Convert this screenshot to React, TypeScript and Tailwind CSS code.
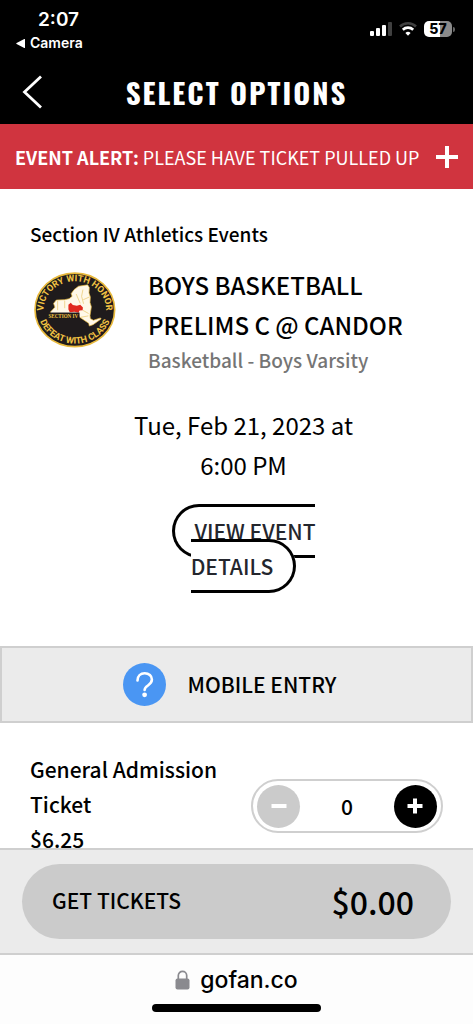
import { useState } from "react";

const PRICE = 6.25;

function StatusBar() {
  return (
    <div className="flex h-[60px] items-start justify-between bg-black pl-4 pr-[18px] font-['Inter',sans-serif] text-white">
      <div className="pt-2">
        <p className="pl-[22px] text-[19px] font-semibold leading-6">2:07</p>
        <p className="flex items-center gap-1 text-sm font-semibold leading-[22px]">
          <svg className="h-[9px] w-[10px]" viewBox="0 0 10 9" fill="currentColor">
            <path d="M9 0.3v8.4a0.5 0.5 0 0 1-.7.2L.6 5a.6.6 0 0 1 0-1L8.300.1a.5.5 0 0 1 .7.2z" />
          </svg>
          Camera
        </p>
      </div>
      <div className="flex items-center gap-[7px] pt-[21px]">
        <svg className="h-4 w-[22px]" viewBox="0 0 22 16" fill="currentColor">
          <rect x="0" y="10" width="4" height="5" rx="1" />
          <rect x="6" y="7" width="4" height="8" rx="1" />
          <rect x="12" y="4" width="4" height="11" rx="1" />
          <rect x="18" y="1" width="4" height="14" rx="1" opacity="0.25" />
        </svg>
        <svg className="h-4 w-[18px]" viewBox="0 0 18 16" fill="none" stroke="currentColor">
          <path d="M1 5.500a11.500 11.500 0 0 1 16 0" strokeWidth="2.600" opacity="0.25" />
          <path d="M3.800 8.700a7.600 7.600 0 0 1 10.400 0" strokeWidth="2.600" />
          <path d="M9 14.800l-2.600-2.900a4 4 0 0 1 5.200 0z" fill="currentColor" stroke="none" />
        </svg>
        <div className="flex items-center gap-px">
          <span className="flex h-4 w-7 items-center justify-center rounded-[5px] bg-linear-to-r from-white from-57% to-[#8a8a8a] to-57% text-sm font-extrabold leading-4 text-black">
            57
          </span>
          <span className="h-[5px] w-[2px] rounded-r-full bg-[#666]" />
        </div>
      </div>
    </div>
  );
}

function SectionLogo() {
  return (
    <svg className="h-[76px] w-[82px] shrink-0" viewBox="27 24 243 225" role="img" aria-label="Section IV">
      <defs>
        <path id="arc-top" d="M56 150A93 86 0 1 1 240 150" />
        <path id="arc-bottom" d="M39 136A109 100 0 0 0 257 136" />
      </defs>
      <ellipse cx="148" cy="136" rx="118" ry="109" fill="#1f1b1c" stroke="#e8b93c" strokeWidth="5" />
      <g fill="#f3c443" className="font-['Roboto',sans-serif] text-[27px] font-bold">
        <text textAnchor="middle">
          <textPath href="#arc-top" startOffset="50%">VICTORY WITH HONOR</textPath>
        </text>
        <text textAnchor="middle">
          <textPath href="#arc-bottom" startOffset="50%">DEFEAT WITH CLASS</textPath>
        </text>
      </g>
      <path
        d="M75 143l14-15-4-11 8-10 24-1 14-3 9-7-3-8 9-12 13-10 27-4 5 8-1 16 4 12-1 16 4 13-4 26 1 9 9 5 21-7 2 3-24 17-11 4-2-8-19-13-9-6-4-8-76 1z"
        fill="#fff8e8"
        stroke="#e8b93c"
        strokeWidth="2"
      />
      <path d="M97 110v27M118 109v22M152 89l12 28M172 76l-4 20 6 22M191 98l-18 8M171 137l18 10M166 158l22-4" fill="none" stroke="#e9c565" strokeWidth="2" />
      <path d="M129 121l7-6 6 7 12 2 10-3 8 8-1 8-9 1-3 7-12-3-14 1-4-8z" fill="#e0281e" />
      <rect x="68" y="144" width="94" height="19" fill="#1f1b1c" />
      <text x="70" y="159" fill="#f3c443" className="font-['Liberation_Serif',serif] text-[15px] font-bold">
        SECTION IV
      </text>
    </svg>
  );
}

export default function App() {
  const [quantity, setQuantity] = useState(0);

  return (
    <div className="flex h-screen flex-col bg-white font-['Noto_Sans_CJK_SC',sans-serif] font-medium text-black">
      <StatusBar />

      <header className="grid h-16 shrink-0 grid-cols-[1fr_auto_1fr] items-center bg-black px-[22px] text-white">
        <button type="button" aria-label="Back" className="justify-self-start">
          <svg className="h-[34px] w-[21px]" viewBox="0 0 21 34" fill="none" stroke="currentColor" strokeWidth="2.800">
            <path d="M19 1.500L2.500 17 19 32.500" />
          </svg>
        </button>
        <h1 className="font-['Oswald','Roboto_Condensed','Liberation_Sans_Narrow',sans-serif] text-[29px] font-bold leading-10 tracking-[2px]">
          SELECT OPTIONS
        </h1>
      </header>

      <section className="flex h-[65px] shrink-0 items-center justify-between bg-[#d0343f] pl-[15px] pr-[14px] text-white">
        <p className="whitespace-nowrap text-[18px] font-normal leading-7">
          <strong className="font-bold">EVENT ALERT:</strong> PLEASE HAVE TICKET PULLED UP
        </p>
        <button type="button" aria-label="Show alert" className="shrink-0">
          <svg className="h-6 w-6" viewBox="0 0 24 24" stroke="currentColor" strokeWidth="4">
            <path d="M12 1v22M1 12h22" />
          </svg>
        </button>
      </section>

      <main className="min-h-0 flex-1 overflow-hidden">
        <div className="px-[30px] pt-[30px]">
          <p className="text-[19px] leading-[30px]">Section IV Athletics Events</p>

          <div className="mt-4 flex gap-8 pl-1">
            <div className="pt-[7px]">
              <SectionLogo />
            </div>
            <div>
              <h2 className="text-2xl font-medium leading-10">BOYS BASKETBALL PRELIMS C @ CANDOR</h2>
              <p className="text-[19px] leading-[30px] text-[#757575]">Basketball - Boys Varsity</p>
            </div>
          </div>

          <div className="mt-[30px] pl-[14px] text-center">
            <p className="mx-auto w-60 text-2xl font-normal leading-10">Tue, Feb 21, 2023 at 6:00 PM</p>
            <div className="mx-auto mt-[29px] w-40 text-[21px] leading-[35px]">
              <a
                href="#details"
                className="rounded-full border-3 border-black bg-white px-5 py-[9px] text-[#24262d]"
              >
                VIEW EVENT DETAILS
              </a>
            </div>
          </div>
        </div>

        <div className="mt-[62px] flex h-[77px] items-center justify-center gap-[22px] border-2 border-[#cfcfcf] bg-[#ebebeb] pr-[14px]">
          <svg className="h-[43px] w-[43px]" viewBox="0 0 43 43" fill="none">
            <circle cx="21.500" cy="21.500" r="21.500" fill="#4a96f3" />
            <path
              d="M14.500 17.500c0-4.600 3.200-7.300 7.200-7.300 4.200 0 7.200 2.800 7.200 6.400 0 6-7.300 5.600-7.300 10.400"
              stroke="#fff"
              strokeWidth="2.600"
              strokeLinecap="round"
            />
            <circle cx="21.600" cy="31.800" r="2.400" fill="#fff" />
          </svg>
          <span className="text-[21px] leading-[35px]">MOBILE ENTRY</span>
        </div>

        <div className="flex items-start justify-between px-[30px] pt-[29px] text-[21px] leading-[35px]">
          <div className="w-[200px]">
            <h3 className="font-medium">General Admission Ticket</h3>
            <p>$6.25</p>
          </div>
          <div className="mt-[27px] flex h-[54px] w-48 items-center justify-between rounded-full border-2 border-[#cfcfcf] px-1">
            <button
              type="button"
              aria-label="Remove ticket"
              disabled={quantity === 0}
              onClick={() => setQuantity(quantity - 1)}
              className="flex h-[43px] w-[43px] items-center justify-center rounded-full bg-[#cbcbcb] text-white"
            >
              <svg className="h-4 w-4" viewBox="0 0 16 16" stroke="currentColor" strokeWidth="4">
                <path d="M0.500 8h15" />
              </svg>
            </button>
            <output>{quantity}</output>
            <button
              type="button"
              aria-label="Add ticket"
              onClick={() => setQuantity(quantity + 1)}
              className="flex h-[43px] w-[43px] items-center justify-center rounded-full bg-black text-white"
            >
              <svg className="h-4 w-4" viewBox="0 0 16 16" stroke="currentColor" strokeWidth="4">
                <path d="M0.500 8h15M8 0.500v15" />
              </svg>
            </button>
          </div>
        </div>
      </main>

      <div className="shrink-0 border-y-2 border-[#cfcfcf] bg-[#ebebeb] px-[22px] py-[14px]">
        <button
          type="button"
          className="flex h-[75px] w-full items-center justify-between rounded-full bg-[#cbcbcb] pb-[2px] pl-[30px] pr-[37px]"
        >
          <span className="text-[21px]">GET TICKETS</span>
          <span className="text-[32px]">${(quantity * PRICE).toFixed(2)}</span>
        </button>
      </div>

      <footer className="flex h-[69px] shrink-0 flex-col items-center justify-between bg-[#fdfdfd] pb-3 pt-[9px] font-['Inter',sans-serif]">
        <a href="#site" className="flex items-center gap-[10px] text-[23px] leading-8">
          <svg className="h-5 w-[15px]" viewBox="0 0 15 20">
            <rect x="0.500" y="8.500" width="14" height="11" rx="2" fill="#8a8a8f" />
            <path d="M3.300 9V5.500a4.200 4.200 0 0 1 8.400 0V9" fill="none" stroke="#8a8a8f" strokeWidth="1.700" />
          </svg>
          gofan.co
        </a>
        <div className="h-2 w-[169px] rounded-full bg-black" />
      </footer>
    </div>
  );
}
